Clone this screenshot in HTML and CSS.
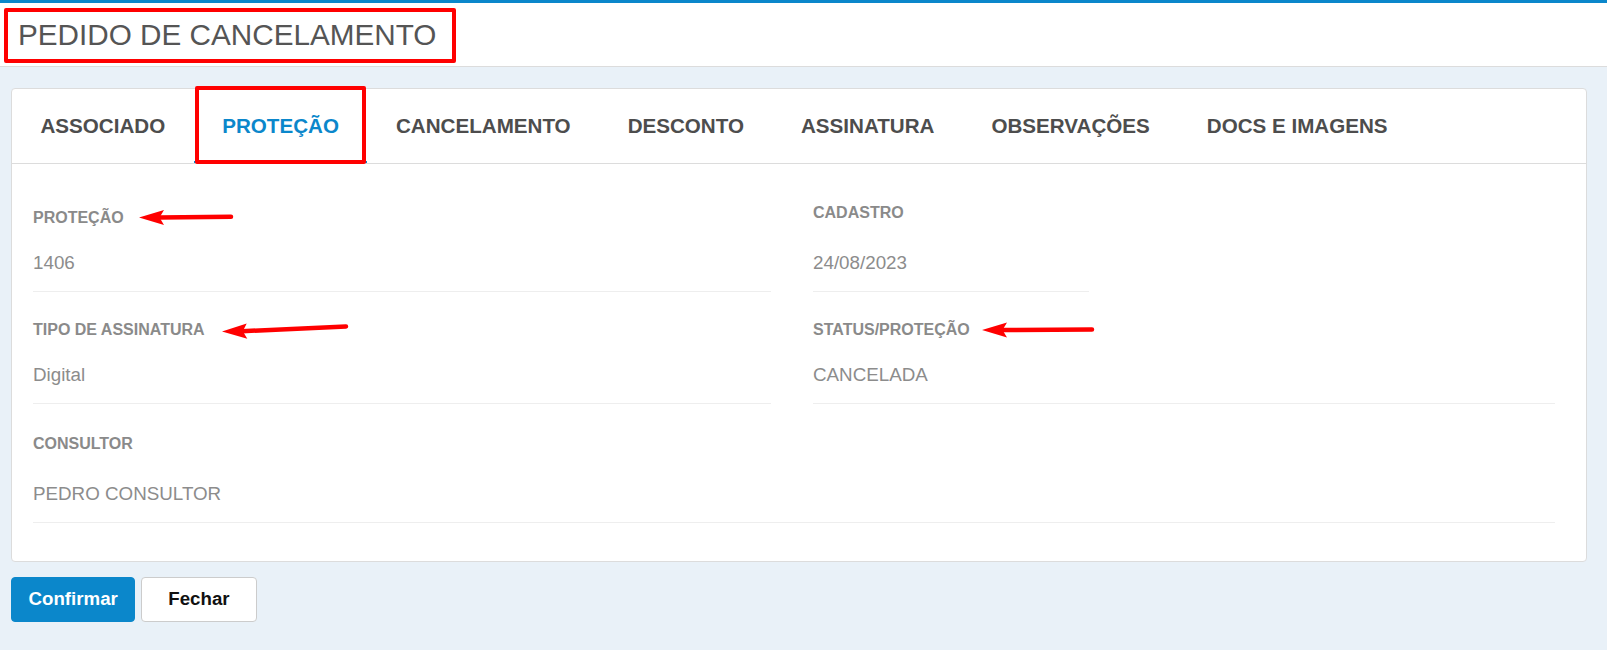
FILE: index.html
```html
<!DOCTYPE html>
<html lang="pt-BR">
<head>
<meta charset="utf-8">
<title>Pedido de cancelamento</title>
<link rel="stylesheet" href="styles.css">
</head>
<body>
<header class="page-header">
  <h1 class="page-title page-title--marked">PEDIDO DE CANCELAMENTO</h1>
</header>

<main class="page-body">
  <section class="card">
    <nav class="tabs">
      <a class="tab">ASSOCIADO</a>
      <a class="tab tab--active tab--marked">PROTEÇÃO</a>
      <a class="tab">CANCELAMENTO</a>
      <a class="tab">DESCONTO</a>
      <a class="tab">ASSINATURA</a>
      <a class="tab">OBSERVAÇÕES</a>
      <a class="tab">DOCS E IMAGENS</a>
    </nav>

    <div class="fields">
      <div class="field field--shift">
        <div class="field-label">
          <span>PROTEÇÃO</span>
          <svg class="pointer pointer--a" width="96" height="18" viewBox="0 0 96 18">
            <path d="M1 8.5 L26 1 L21.5 8.5 L26 16 Z" fill="#ff0000"/>
            <path d="M21 8.5 L93 7.8" stroke="#ff0000" stroke-width="4.5" stroke-linecap="round"/>
          </svg>
        </div>
        <div class="field-value">1406</div>
      </div>
      <div class="field field--short">
        <div class="field-label"><span>CADASTRO</span></div>
        <div class="field-value">24/08/2023</div>
      </div>

      <div class="field field--tight">
        <div class="field-label">
          <span>TIPO DE ASSINATURA</span>
          <svg class="pointer pointer--b" width="128" height="20" viewBox="0 0 128 20">
            <path d="M1 11.5 L25.7 3.5 L21.8 11.2 L26.3 18.8 Z" fill="#ff0000"/>
            <path d="M21 11.2 L125 6.5" stroke="#ff0000" stroke-width="4.5" stroke-linecap="round"/>
          </svg>
        </div>
        <div class="field-value">Digital</div>
      </div>
      <div class="field field--tight">
        <div class="field-label">
          <span>STATUS/PROTEÇÃO</span>
          <svg class="pointer pointer--c" width="114" height="18" viewBox="0 0 114 18">
            <path d="M1 9 L26 1.5 L21.5 9 L26 16.5 Z" fill="#ff0000"/>
            <path d="M21 9 L111 8.5" stroke="#ff0000" stroke-width="4.5" stroke-linecap="round"/>
          </svg>
        </div>
        <div class="field-value">CANCELADA</div>
      </div>

      <div class="field field--wide">
        <div class="field-label"><span>CONSULTOR</span></div>
        <div class="field-value">PEDRO CONSULTOR</div>
      </div>
    </div>
  </section>

  <div class="actions">
    <button class="btn btn--primary" type="button">Confirmar</button>
    <button class="btn btn--default" type="button">Fechar</button>
  </div>
</main>
</body>
</html>
```

FILE: styles.css
```css
* {
  box-sizing: border-box;
}

html,
body {
  margin: 0;
  padding: 0;
}

body {
  min-height: 650px;
  background: #e9f1f8;
  font-family: "Liberation Sans", Arial, sans-serif;
  color: #555;
}

/* ---- header ---- */
.page-header {
  height: 67px;
  background: #fff;
  border-top: 3px solid #0b87cb;
  border-bottom: 1px solid #dcdcdc;
}

.page-title {
  position: relative;
  display: inline-block;
  margin: 0;
  padding: 0 18px;
  height: 63px;
  line-height: 63px;
  font-size: 29.7px;
  font-weight: normal;
  color: #555;
  white-space: nowrap;
}

/* red highlight frame */
.page-title--marked::after {
  content: "";
  position: absolute;
  top: 5px;
  bottom: 3px;
  left: 4px;
  right: -2px;
  border: 4px solid #ff0000;
  border-radius: 2px;
}

/* ---- body ---- */
.page-body {
  padding: 21px 20px 0 11px;
}

.card {
  background: #fff;
  border: 1px solid #dcdcdc;
  border-radius: 4px;
}

.tabs {
  display: flex;
  height: 75px;
  border-bottom: 1px solid #dcdcdc;
}

.tab {
  position: relative;
  display: block;
  height: 74px;
  padding: 0 28.5px;
  line-height: 74px;
  font-size: 20.6px;
  font-weight: bold;
  color: #4d4d4d;
  white-space: nowrap;
  cursor: pointer;
}

.tab--active {
  color: #0b87cb;
  border-bottom: 2px solid #0b87cb;
}

.tab--marked::after {
  content: "";
  position: absolute;
  top: -3px;
  bottom: -3px;
  left: 1px;
  right: 1px;
  border: 4px solid #ff0000;
  border-radius: 2px;
}

/* ---- fields ---- */
.fields {
  display: grid;
  grid-template-columns: 738px 742px;
  column-gap: 42px;
  padding: 11px 31px 38px 21px;
}

.field {
  padding: 29px 0 18px;
  border-bottom: 1px solid #eeeeee;
}

.field--short {
  width: 276px;
}

.field--wide {
  grid-column: 1 / -1;
  padding-top: 31px;
}

.field-label {
  display: flex;
  align-items: center;
  height: 18px;
  font-size: 16px;
  font-weight: bold;
  color: #8a8a8a;
  white-space: nowrap;
}

.field-value {
  margin-top: 29.5px;
  height: 21px;
  line-height: 21px;
  font-size: 18.8px;
  color: #8c8c8c;
}

.field--shift .field-label {
  margin-top: 5px;
}

.field--shift .field-value {
  margin-top: 24.5px;
}

.field--tight .field-value {
  margin-top: 25.5px;
}

.pointer {
  flex: none;
  overflow: visible;
}

.pointer--a {
  margin-left: 14px;
}

.pointer--b {
  margin-left: 16px;
}

.pointer--c {
  margin-left: 11px;
}

/* ---- buttons ---- */
.actions {
  display: flex;
  gap: 6px;
  margin-top: 15px;
}

.btn {
  height: 45px;
  border-radius: 4px;
  font-family: "Liberation Sans", Arial, sans-serif;
  font-size: 18.7px;
  font-weight: bold;
  cursor: pointer;
}

.btn--primary {
  padding: 0 16.5px;
  background: #0b87cb;
  border: 1px solid #0b87cb;
  color: #fff;
}

.btn--default {
  padding: 0 26px;
  background: #fff;
  border: 1px solid #cccccc;
  color: #111;
}
```
